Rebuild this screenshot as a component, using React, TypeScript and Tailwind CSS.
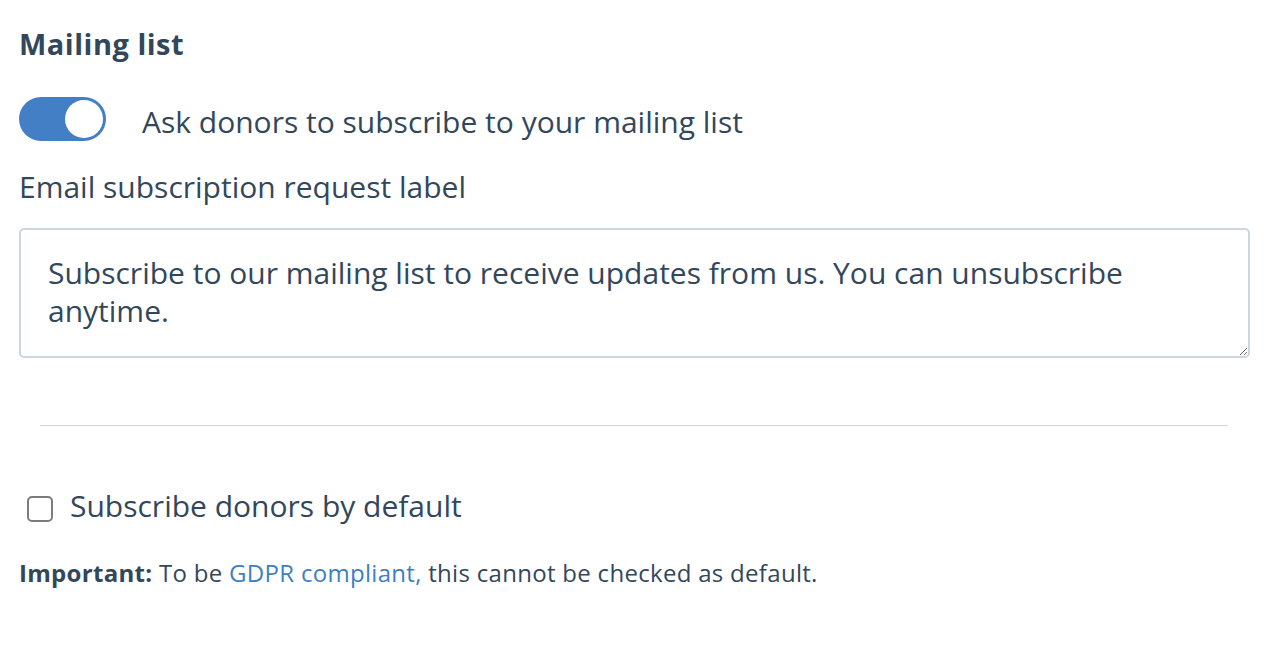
import { useState } from "react";

export default function App() {
  const [on, setOn] = useState(true);
  const [checked, setChecked] = useState(false);

  return (
    <div
      className="min-h-screen bg-white px-[19px] pt-[22px] text-[#33475b]"
      style={{ fontFamily: "'Open Sans', 'Noto Sans', sans-serif" }}
    >
      <h2 className="text-[29px] font-bold leading-[44px] tracking-[0.5px]">Mailing list</h2>

      <div className="mt-[31px] flex items-start gap-[36px]">
        <button
          onClick={() => setOn((v) => !v)}
          className={`relative h-[44px] w-[87px] shrink-0 rounded-full ${on ? "bg-[#437fc5]" : "bg-[#cbd6e2]"}`}
          aria-label="Toggle mailing list"
        >
          <span
            className={`absolute top-[3px] h-[38px] w-[38px] rounded-full bg-white ${on ? "left-[46px]" : "left-[3px]"}`}
          />
        </button>
        <span className="pt-[3px] text-[30px] leading-[44px]">Ask donors to subscribe to your mailing list</span>
      </div>

      <div className="mt-[25px] text-[30px] leading-[36px]">Email subscription request label</div>

      <textarea
        className="mt-[23px] block h-[130px] w-[1231px] resize-y rounded-[5px] border-2 border-[#cbd6e2] px-[27px] pb-[20px] pt-[24px] text-[30px] leading-[38px] text-[#33475b] outline-none"
        defaultValue="Subscribe to our mailing list to receive updates from us. You can unsubscribe anytime."
      />

      <div className="mx-[21px] mt-[67px] h-px bg-[#cbd6e2]" />

      <label className="mt-[60px] flex items-start gap-[17px] pl-[8px]">
        <input
          type="checkbox"
          checked={checked}
          onChange={(e) => setChecked(e.target.checked)}
          className="mt-[10px] h-[26px] w-[26px] shrink-0 appearance-none rounded-[5px] border-2 border-[#7c7c7c] bg-white"
        />
        <span className="text-[30px] leading-[40px]">Subscribe donors by default</span>
      </label>

      <p className="mt-[32px] text-[24px] leading-[30px] tracking-[0.3px]">
        <span className="font-bold">Important:</span> To be{" "}
        <a href="#" className="text-[#3e7fc4]">
          GDPR compliant,
        </a>{" "}
        this cannot be checked as default.
      </p>
    </div>
  );
}
